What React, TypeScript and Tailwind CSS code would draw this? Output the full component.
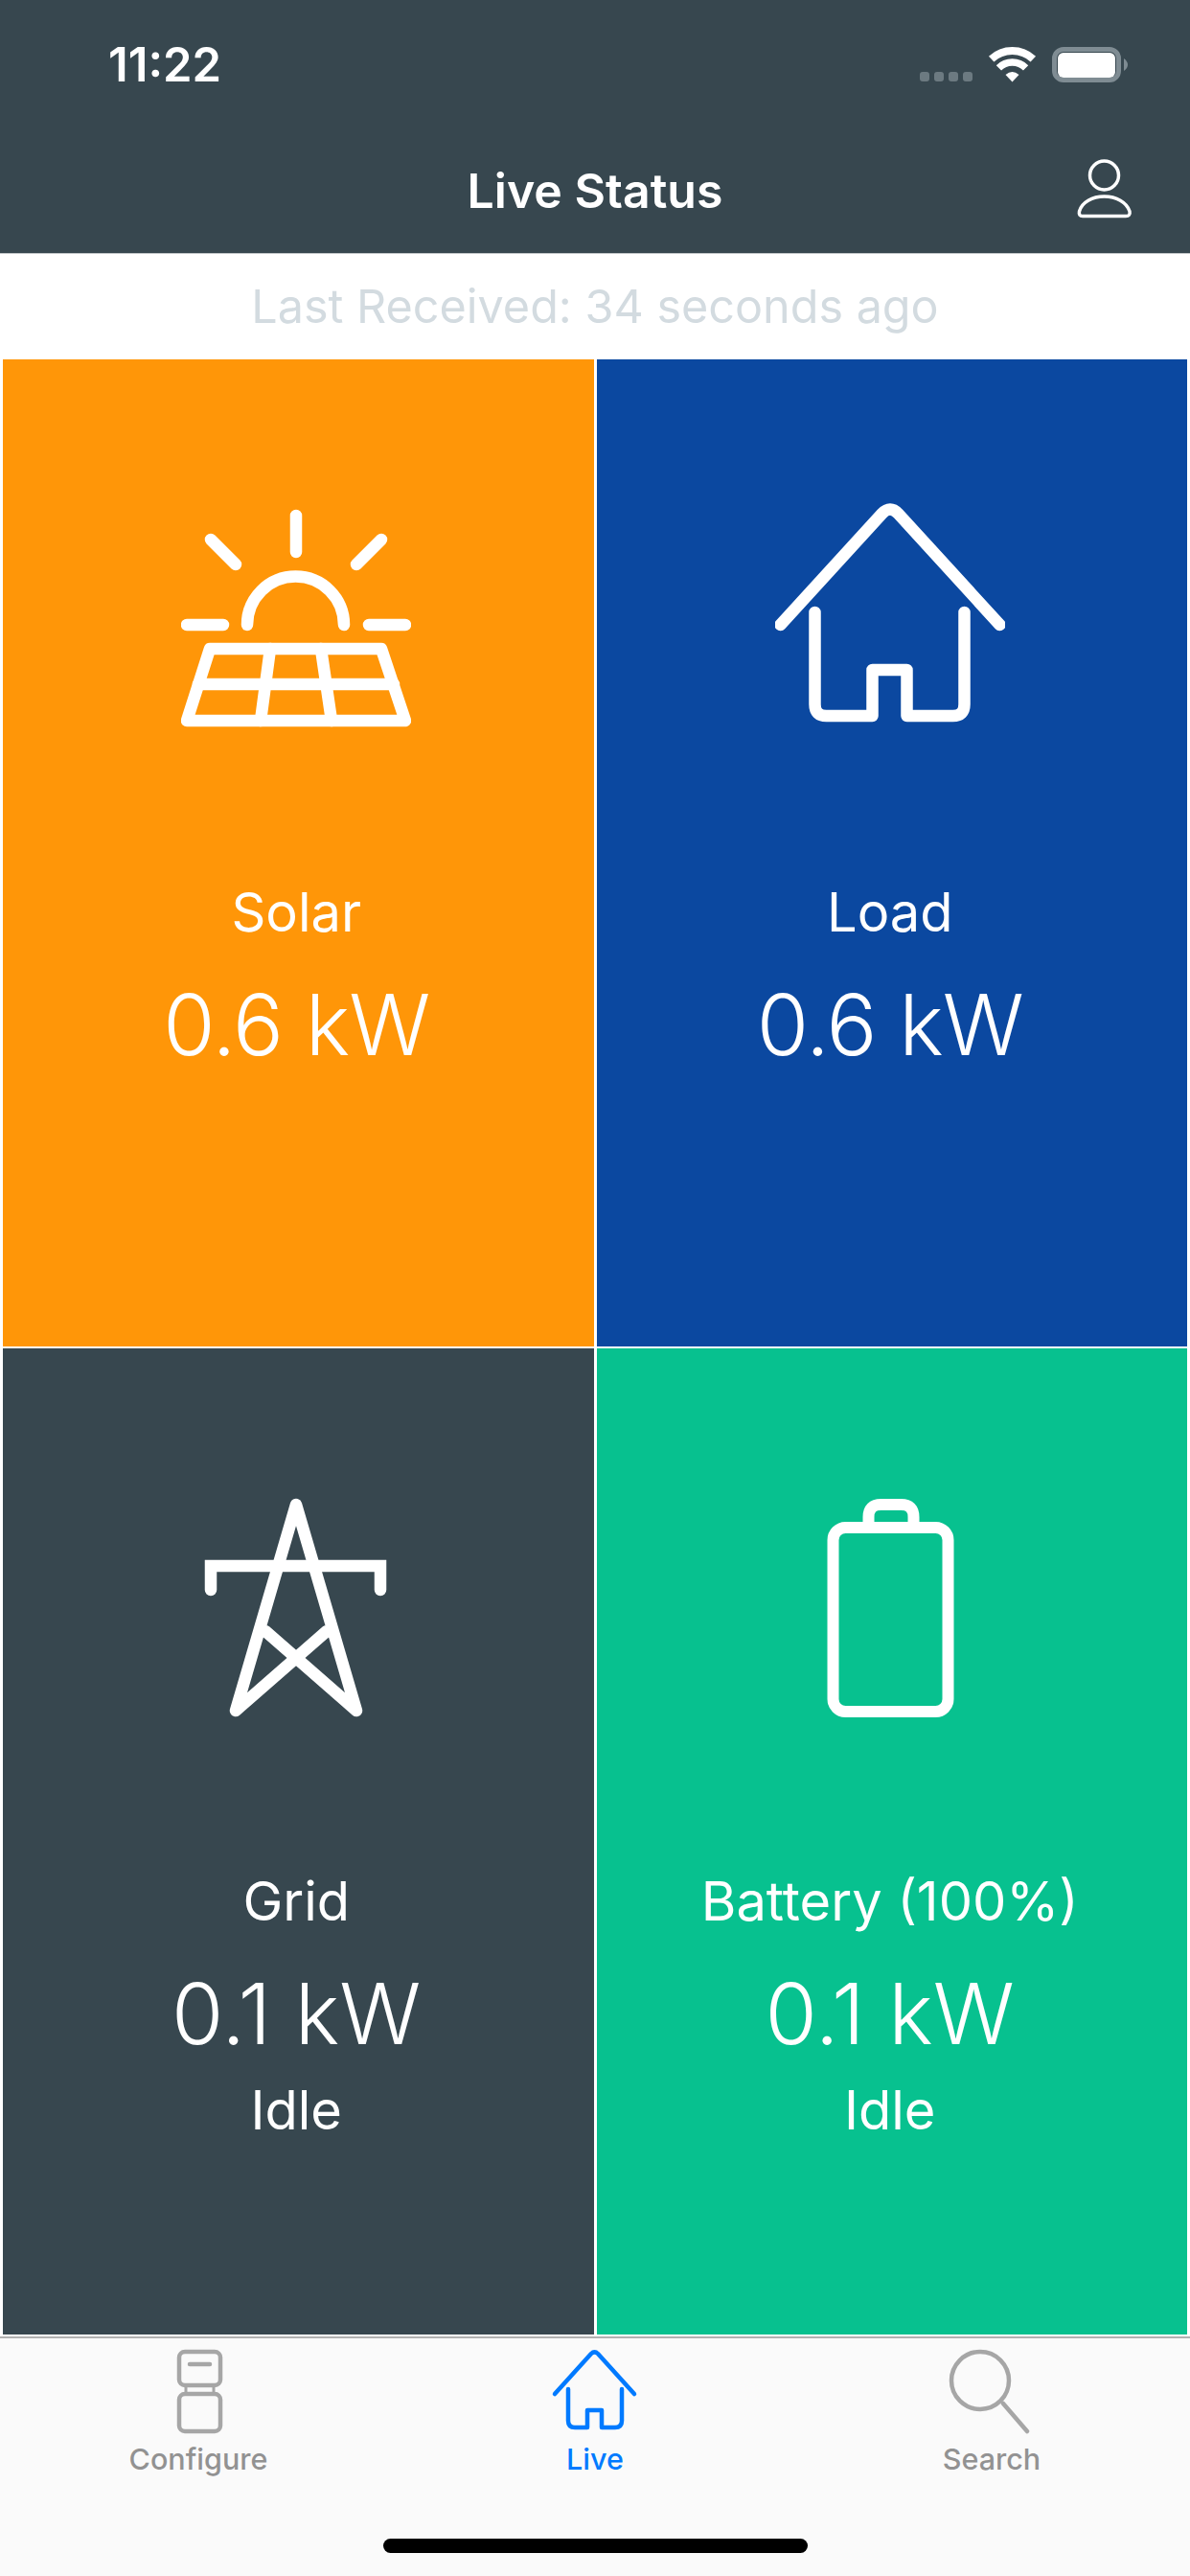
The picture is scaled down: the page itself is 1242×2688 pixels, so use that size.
import React from "react";

const sw = { fill: "none", stroke: "white", strokeWidth: 12.5, strokeLinecap: "round" as const, strokeLinejoin: "round" as const };

function SolarIcon() {
  return (
    <svg className="w-[240px] h-[280px] block" viewBox="189 515 240 280" {...sw}>
      <path d="M309 538V576M220 563L246 589M398 563L372 589M195 652H233M385 652H423" />
      <path d="M258 652A50.5 50.5 0 0 1 359 652" />
      <path d="M219 677H398L423 752H195Z" />
      <path d="M207 714H411M282 677L272 752M335 677L346 752" />
    </svg>
  );
}

function HouseIcon() {
  return (
    <svg className="w-[240px] h-[280px] block" viewBox="808.5 515 240 280" {...sw}>
      <path d="M814 652L920 536Q928.5 527 937 536L1043 652" />
      <path d="M850 639V735Q850 747 862 747H910V699H946V747H994Q1006 747 1006 735V639" />
    </svg>
  );
}

function PylonIcon() {
  return (
    <svg className="w-[240px] h-[280px] block" viewBox="189 1546 240 280" {...sw}>
      <path d="M246 1784L309 1569L372 1784L277 1701M246 1784L341 1701" />
      <path d="M220 1658V1633H397V1658" strokeLinejoin="miter" />
    </svg>
  );
}

function BatteryIcon() {
  return (
    <svg className="w-[240px] h-[280px] block" viewBox="807.5 1546 240 280" {...sw} strokeWidth={12}>
      <rect x="868" y="1593" width="120" height="192" rx="13" />
      <path d="M905 1593V1582Q905 1569 918 1569H939Q952 1569 952 1582V1593" />
    </svg>
  );
}

function Cell({ bg, icon, label, value, valueTrack, sub }: { bg: string; icon: React.ReactNode; label: string; value: string; valueTrack: string; sub?: string }) {
  return (
    <div className={`${bg} flex flex-col items-center pt-[140px] pr-[4px] text-white`}>
      {icon}
      <div className="mt-[122px] text-[56px] leading-[70px] font-normal">{label}</div>
      <div className={`mt-[32px] text-[88px] leading-[100px] font-[350] ${valueTrack}`}>{value}</div>
      {sub && <div className="mt-[16px] text-[56px] leading-[70px] font-normal">{sub}</div>}
    </div>
  );
}

export default function App() {
  return (
    <div className="w-[1242px] h-[2688px] flex flex-col bg-white font-['Inter','Liberation_Sans',sans-serif]">
      <header className="h-[265px] shrink-0 bg-[#37474f] border-b-[1px] border-[#c4c8ca] text-white">
        <div className="h-[134px] flex items-center justify-between pl-[113px] pr-[62px]">
          <span className="text-[49px] font-semibold leading-none">11:22</span>
          <svg className="w-[225px] h-[45px] block" viewBox="955 45 225 45">
            <g fill="#6c7a81">
              <rect x="960" y="75" width="10" height="10" rx="3" />
              <rect x="975" y="75" width="10" height="10" rx="3" />
              <rect x="990" y="75" width="10" height="10" rx="3" />
              <rect x="1005" y="75" width="10" height="10" rx="3" />
            </g>
            <g fill="none" stroke="white">
              <path d="M1034.7 61.6A32 32 0 0 1 1078.3 61.6" strokeWidth="8" />
              <path d="M1042.4 70.9A20 20 0 0 1 1070.6 70.9" strokeWidth="7.5" />
            </g>
            <path d="M1056.5 85.5L1049.5 78Q1056.5 72 1063.5 78Z" fill="white" />
            <rect x="1100.5" y="51.5" width="67" height="32" rx="9.5" fill="none" stroke="#7f8c93" strokeWidth="5" />
            <rect x="1104" y="55" width="60" height="26" rx="6" fill="white" />
            <path d="M1173 61Q1177 64 1177 67.5Q1177 71 1173 74Z" fill="#7f8c93" />
          </svg>
        </div>
        <div className="h-[130px] grid grid-cols-[1fr_auto_1fr] items-center pr-[58px]">
          <div />
          <div className="text-[50px] font-semibold leading-none ml-[58px]">Live Status</div>
          <div className="flex justify-end pb-[5px]">
            <svg className="w-[64px] h-[70px] block" viewBox="1121 162 64 70" fill="none" stroke="white" strokeWidth="3.5">
              <circle cx="1153.5" cy="183" r="15" />
              <path d="M1131 225.5H1176Q1181 225.5 1180 220.5C1177 211 1166 205 1153.5 205C1141 205 1130 211 1127.5 220.5Q1126.5 225.5 1131 225.5Z" />
            </svg>
          </div>
        </div>
      </header>

      <div className="h-[110px] shrink-0 flex items-center justify-center text-[#d3dbe0] text-[48.5px] font-normal leading-none">
        Last Received: 34 seconds ago
      </div>

      <main className="h-[2061px] shrink-0 grid grid-cols-2 grid-rows-2 gap-x-[3px] gap-y-[2px] px-[3px]">
        <Cell bg="bg-[#ff9608]" icon={<SolarIcon />} label="Solar" value="0.6 kW" valueTrack="tracking-[-1px]" />
        <Cell bg="bg-[#0b48a0]" icon={<HouseIcon />} label="Load" value="0.6 kW" valueTrack="tracking-[-1px]" />
        <Cell bg="bg-[#37474f]" icon={<PylonIcon />} label="Grid" value="0.1 kW" valueTrack="tracking-[0px]" sub="Idle" />
        <Cell bg="bg-[#07c18f]" icon={<BatteryIcon />} label="Battery (100%)" value="0.1 kW" valueTrack="tracking-[0px]" sub="Idle" />
      </main>

      <nav className="mt-[2px] flex-1 bg-[#fafafa] border-t-[2px] border-[#b2b2b2] flex flex-col">
        <div className="grid grid-cols-3 pt-[10px]">
          <div className="flex flex-col items-center text-[#929292]">
            <svg className="w-[120px] h-[90px] block" viewBox="147 2450 120 90" fill="none" stroke="#a6a6a6" strokeWidth="4.5" strokeLinecap="round">
              <rect x="187" y="2454" width="43" height="35" rx="6" />
              <rect x="187" y="2498" width="43" height="39" rx="6" />
              <path d="M198 2467H219" />
              <path d="M194 2490V2497M223 2490V2497" strokeWidth="3" strokeLinecap="butt" />
            </svg>
            <span className="text-[30.5px] font-medium leading-[34px] mt-[9px]">Configure</span>
          </div>
          <div className="flex flex-col items-center text-[#007aff]">
            <svg className="w-[120px] h-[90px] block" viewBox="561 2450 120 90" fill="none" stroke="#007aff" strokeWidth="4.5" strokeLinecap="round" strokeLinejoin="round">
              <path d="M579 2498L617 2456Q620.5 2452.5 624 2456L662 2498" />
              <path d="M593 2493V2526Q593 2533 600 2533H613V2515H628V2533H642Q649 2533 649 2526V2493" />
            </svg>
            <span className="text-[30.5px] font-medium leading-[34px] mt-[9px]">Live</span>
          </div>
          <div className="flex flex-col items-center text-[#929292]">
            <svg className="w-[120px] h-[90px] block" viewBox="975 2450 120 90" fill="none" stroke="#a6a6a6" strokeWidth="4.5" strokeLinecap="round">
              <circle cx="1023" cy="2484" r="30" />
              <path d="M1047 2508L1072 2537" />
            </svg>
            <span className="text-[30.5px] font-medium leading-[34px] mt-[9px]">Search</span>
          </div>
        </div>
        <div className="mt-auto mb-[24px] self-center w-[443px] h-[15px] rounded-full bg-black" />
      </nav>
    </div>
  );
}
